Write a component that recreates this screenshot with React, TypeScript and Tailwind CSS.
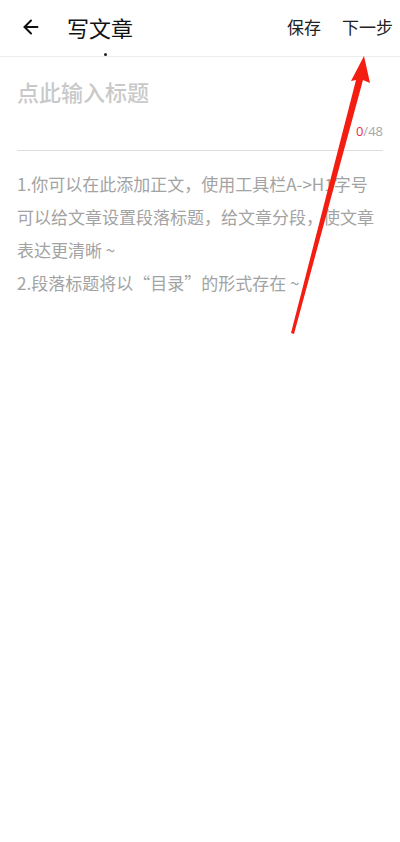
import { ArrowLeft } from "lucide-react"

const font = { fontFamily: '"Noto Sans CJK SC", "Noto Sans", sans-serif' }

export default function App() {
    return (
        <div className="relative w-[400px] h-[842px] bg-white overflow-hidden" style={font}>
            {/* header */}
            <div className="relative flex items-center h-[57px] border-b border-[#ececec] pl-[20px] pr-[7px] pb-[3px]">
                <ArrowLeft className="w-[22px] h-[22px] text-[#111]" strokeWidth={2.2} />
                <span className="ml-[25px] text-[22px] text-[#111] leading-none">写文章</span>
                <span className="ml-auto text-[17px] text-[#222] leading-none">保存</span>
                <span className="ml-[21px] text-[17px] text-[#222] leading-none">下一步</span>
                <span className="absolute left-[104px] top-[53px] w-[3px] h-[3px] rounded-full bg-[#222]" />
            </div>

            {/* title input */}
            <div className="px-[17px]">
                <div className="pt-[19px] text-[22px] leading-[30px] font-medium text-[#c9c9c9]">点此输入标题</div>
                <div className="flex justify-end pt-[16px] text-[13px] leading-[18px]" style={{ fontFamily: '"Open Sans", "Noto Sans", sans-serif' }}>
                    <span className="text-[#e5304a]">0</span>
                    <span className="text-[#a8a8a8]">/48</span>
                </div>
                <div className="mt-[10px] h-px bg-[#dedede]" />

                {/* body placeholder */}
                <div className="pt-[16px] text-[17px] leading-[33px] text-[#a3a3a3]">
                    <div>1.你可以在此添加正文，使用工具栏A-&gt;H1字号</div>
                    <div>可以给文章设置段落标题，给文章分段，使文章</div>
                    <div>表达更清晰 ~</div>
                    <div>2.段落标题将以“目录”的形式存在 ~</div>
                </div>
            </div>

            {/* red annotation arrow */}
            <svg className="absolute left-0 top-0 pointer-events-none" width="400" height="842" viewBox="0 0 400 842">
                <polygon points="291,333 356,80 351,81 364,56 370,83 363,80 294,334" fill="#f41d12" />
            </svg>
        </div>
    )
}
